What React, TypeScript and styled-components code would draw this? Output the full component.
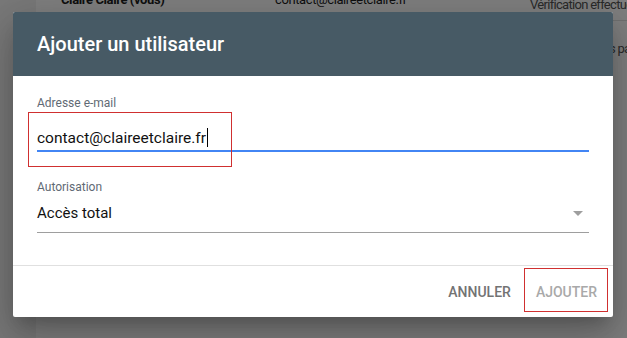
import React from "react";
import styled, { createGlobalStyle } from "styled-components";

const Global = createGlobalStyle`
  html, body { margin: 0; padding: 0; }
  body { font-family: Roboto, "Liberation Sans", Arial, sans-serif; background: #fff; }
  * { box-sizing: border-box; }
`;

const Screen = styled.div`
  position: relative;
  width: 627px;
  height: 338px;
  overflow: hidden;
  display: flex;
`;

const Sidebar = styled.div`
  width: 36px;
  flex: none;
  background: #f3f3f3;
`;

const Main = styled.div`
  flex: 1;
  background: #ffffff;
  display: flex;
  flex-direction: column;
`;

const Row = styled.div<{ $h: number; $border?: boolean }>`
  display: flex;
  height: ${(p) => p.$h}px;
  border-bottom: ${(p) => (p.$border ? "1px solid #e0e0e0" : "none")};
  font-size: 13px;
  line-height: 20px;
  letter-spacing: -0.4px;
`;

const Cell = styled.div<{ $w?: number; $top: number; $left?: number; $bold?: boolean; $muted?: boolean }>`
  width: ${(p) => (p.$w ? `${p.$w}px` : "auto")};
  flex: ${(p) => (p.$w ? "none" : "1")};
  padding-left: ${(p) => p.$left ?? 0}px;
  margin-top: ${(p) => p.$top}px;
  font-weight: ${(p) => (p.$bold ? 700 : 400)};
  color: ${(p) => (p.$muted ? "#555" : "#1e1e1e")};
  letter-spacing: ${(p) => (p.$muted ? "-0.7px" : "inherit")};
  white-space: nowrap;
`;

const Overlay = styled.div`
  position: absolute;
  inset: 0;
  background: rgba(0, 0, 0, 0.5);
`;

const Dialog = styled.div`
  position: absolute;
  left: 13px;
  top: 12px;
  width: 600px;
  background: #fff;
  border-radius: 2px;
  box-shadow: 0 11px 15px -7px rgba(0, 0, 0, 0.2), 0 24px 38px 3px rgba(0, 0, 0, 0.14),
    0 9px 46px 8px rgba(0, 0, 0, 0.12);
  display: flex;
  flex-direction: column;
`;

const Header = styled.div`
  height: 64px;
  background: #475a65;
  border-radius: 2px 2px 0 0;
  padding: 0 24px;
  display: flex;
  align-items: center;
  color: #fff;
  font-size: 20px;
  font-weight: 500;
`;

const Content = styled.div`
  padding: 19px 24px 32px;
  display: flex;
  flex-direction: column;
`;

const Field = styled.div<{ $gap: number }>`
  display: flex;
  flex-direction: column;
  margin-top: ${(p) => p.$gap}px;
`;

const Label = styled.div<{ $below: number }>`
  font-size: 12px;
  line-height: 16px;
  color: #5f6a74;
  margin-bottom: ${(p) => p.$below}px;
`;

const TextValue = styled.div`
  font-size: 15.5px;
  line-height: 24px;
  color: #111;
  border-bottom: 2px solid #4285f4;
  white-space: nowrap;
`;

const Caret = styled.span`
  display: inline-block;
  width: 1px;
  height: 19px;
  background: #000;
  vertical-align: -4px;
  margin-left: 1px;
`;

const SelectValue = styled.div`
  font-size: 15px;
  line-height: 24px;
  color: #111;
  padding-bottom: 7px;
  border-bottom: 1px solid #9e9e9e;
  display: flex;
  align-items: flex-start;
  justify-content: space-between;
`;

const Arrow = styled.span`
  width: 0;
  height: 0;
  margin: 10px 6px 0 0;
  border-left: 5px solid transparent;
  border-right: 5px solid transparent;
  border-top: 5px solid #9e9e9e;
`;

const Footer = styled.div`
  height: 52px;
  border-top: 1px solid #e0e0e0;
  padding: 0 8px;
  display: flex;
  align-items: center;
  justify-content: flex-end;
  gap: 9px;
`;

const Button = styled.button<{ $disabled?: boolean }>`
  border: none;
  background: transparent;
  font-family: Roboto, "Liberation Sans", Arial, sans-serif;
  font-size: 14px;
  font-weight: 500;
  text-transform: uppercase;
  height: 36px;
  padding: 0 8px;
  color: ${(p) => (p.$disabled ? "#a9a9a9" : "#737373")};
  cursor: pointer;
`;

const Annotation = styled.div<{ $l: number; $t: number; $w: number; $h: number }>`
  position: absolute;
  left: ${(p) => p.$l}px;
  top: ${(p) => p.$t}px;
  width: ${(p) => p.$w}px;
  height: ${(p) => p.$h}px;
  border: 1px solid #d03030;
  pointer-events: none;
`;

export default function App() {
  return (
    <>
      <Global />
      <Screen>
        <Sidebar />
        <Main>
          <Row $h={21} $border>
            <Cell $w={239} $left={25} $top={-10} $bold>
              Claire Claire (vous)
            </Cell>
            <Cell $w={255} $top={-10}>
              contact@claireetclaire.fr
            </Cell>
            <Cell $top={-5} $muted>
              Vérification effectuée
            </Cell>
          </Row>
          <Row $h={60}>
            <Cell $w={239} $top={18} />
            <Cell $w={255} $top={18} />
            <Cell $top={18} $left={24} $muted>
              Gestion des paramètres
            </Cell>
          </Row>
        </Main>
        <Overlay />
        <Dialog>
          <Header>Ajouter un utilisateur</Header>
          <Content>
            <Field $gap={0}>
              <Label $below={15}>Adresse e-mail</Label>
              <TextValue>
                contact@claireetclaire.fr
                <Caret />
              </TextValue>
            </Field>
            <Field $gap={27}>
              <Label $below={6}>Autorisation</Label>
              <SelectValue>
                Accès total
                <Arrow />
              </SelectValue>
            </Field>
          </Content>
          <Footer>
            <Button>Annuler</Button>
            <Button $disabled>Ajouter</Button>
          </Footer>
          <Annotation $l={15} $t={100} $w={204} $h={55} />
          <Annotation $l={511} $t={256} $w={84} $h={44} />
        </Dialog>
      </Screen>
    </>
  );
}
